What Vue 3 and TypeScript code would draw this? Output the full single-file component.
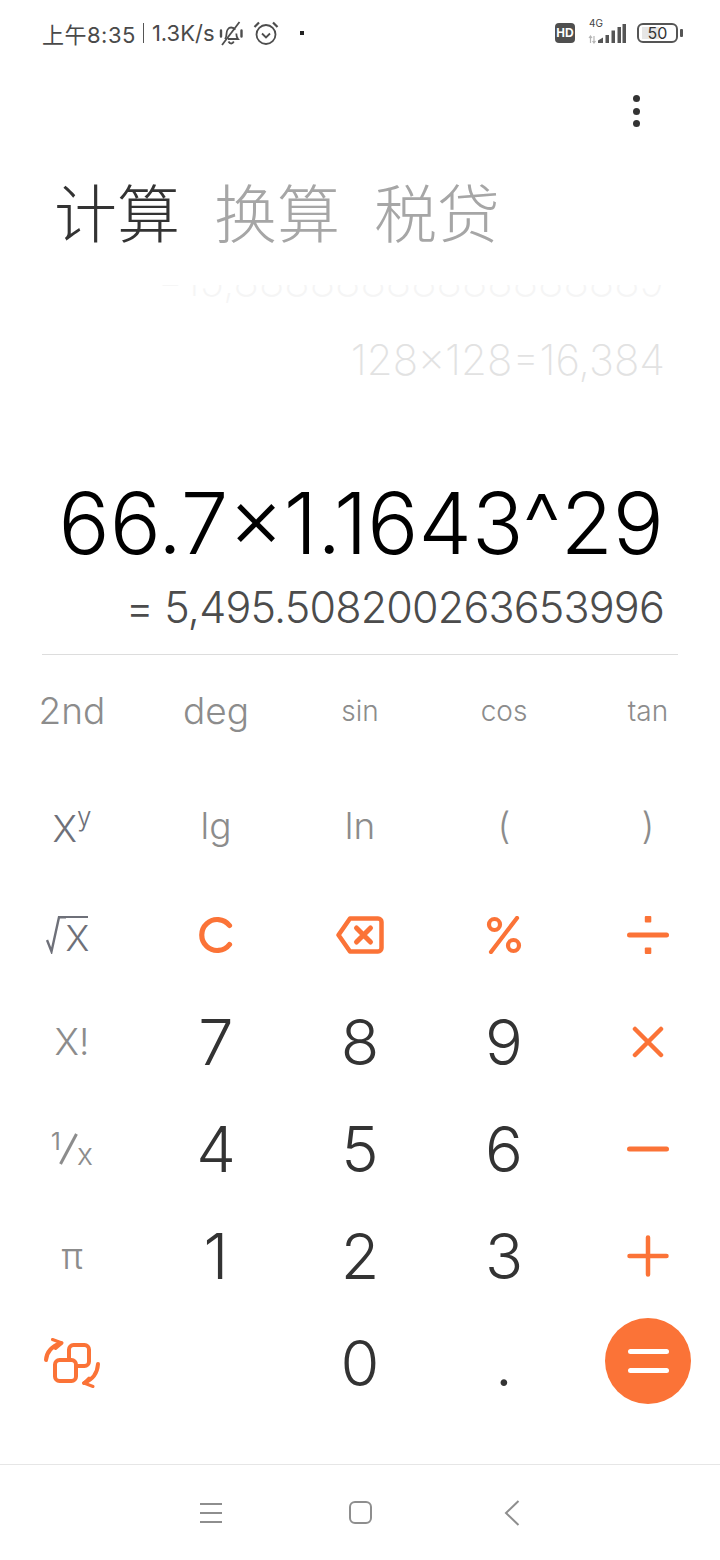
<script setup lang="ts">
interface Key {
  id: string;
  label?: string;
  kind: 'fn' | 'fnsm' | 'num' | 'icon';
}

const keys: Key[] = [
  { id: '2nd', label: '2nd', kind: 'fn' },
  { id: 'deg', label: 'deg', kind: 'fn' },
  { id: 'sin', label: 'sin', kind: 'fnsm' },
  { id: 'cos', label: 'cos', kind: 'fnsm' },
  { id: 'tan', label: 'tan', kind: 'fnsm' },
  { id: 'pow', kind: 'icon' },
  { id: 'lg', label: 'lg', kind: 'fn' },
  { id: 'ln', label: 'ln', kind: 'fn' },
  { id: 'lp', label: '(', kind: 'fn' },
  { id: 'rp', label: ')', kind: 'fn' },
  { id: 'sqrt', kind: 'icon' },
  { id: 'clear', kind: 'icon' },
  { id: 'back', kind: 'icon' },
  { id: 'pct', kind: 'icon' },
  { id: 'div', kind: 'icon' },
  { id: 'fact', label: 'X!', kind: 'fn' },
  { id: '7', label: '7', kind: 'num' },
  { id: '8', label: '8', kind: 'num' },
  { id: '9', label: '9', kind: 'num' },
  { id: 'mul', kind: 'icon' },
  { id: 'inv', kind: 'icon' },
  { id: '4', label: '4', kind: 'num' },
  { id: '5', label: '5', kind: 'num' },
  { id: '6', label: '6', kind: 'num' },
  { id: 'sub', kind: 'icon' },
  { id: 'pi', label: 'π', kind: 'fn' },
  { id: '1', label: '1', kind: 'num' },
  { id: '2', label: '2', kind: 'num' },
  { id: '3', label: '3', kind: 'num' },
  { id: 'add', kind: 'icon' },
  { id: 'swap', kind: 'icon' },
  { id: 'blank', label: '', kind: 'num' },
  { id: '0', label: '0', kind: 'num' },
  { id: 'dot', label: '.', kind: 'num' },
  { id: 'eq', kind: 'icon' }
];
</script>

<template>
  <div class="screen">
    <div class="status">
      <div class="status-left">
        <span class="clock">上午8:35</span>
        <span class="sep"></span>
        <span class="speed">1.3K/s</span>
        <svg class="bell" width="26" height="26" viewBox="0 0 26 26" fill="none" stroke="#4d4d4d" stroke-width="1.8">
          <path d="M7 19c1.200-1.500 1.500-3 1.500-5 0-3.500 1.800-6.500 4.700-6.500 1.800 0 3.200.8 4 2.200M18.300 13.500c0 2.200.4 4 1.700 5.500H10" />
          <path d="M10.500 21.500c.6 1.200 1.500 2 2.700 2s2-.8 2.600-2" />
          <path d="M4 25 21.500 2" />
          <path d="M3 10.500v6M23.500 10.500v6" stroke-linecap="round" stroke-width="2.400" />
        </svg>
        <svg class="alarm" width="26" height="26" viewBox="0 0 26 26" fill="none" stroke="#4d4d4d" stroke-width="1.800">
          <circle cx="13" cy="14.500" r="9.500" />
          <path d="M9 13.500 13 17.500l4-4" />
          <path d="M1.500 7 6 2.500M24.500 7 20 2.500" stroke-width="2.200" />
        </svg>
        <span class="tiny-dot"></span>
      </div>
      <div class="status-right">
        <span class="hd">HD</span>
        <div class="net">
          <span class="net-label">4G</span>
          <svg width="38" height="22" viewBox="0 0 38 22">
            <path d="M2.500 21v-7M1 16l1.500-2 1.500 2M6 14v7M4.500 19 6 21l1.500-2" stroke="#b5b5b5" stroke-width="1.200" fill="none" />
            <path d="M10 21v-2.500l5-3V21zM17.500 21V13h3.500v8zM23.500 21V8.500H27V21zM29.500 21V5H33v16zM34.500 21V2h3.500v19z" fill="#555" />
          </svg>
        </div>
        <div class="battery">
          <span class="battery-fill"></span>
          <span class="battery-text">50</span>
        </div>
        <span class="battery-cap"></span>
      </div>
    </div>

    <div class="toolbar">
      <div class="menu"><i></i><i></i><i></i></div>
    </div>

    <div class="tabs">
      <span class="tab active">计算</span>
      <span class="tab">换算</span>
      <span class="tab">税贷</span>
    </div>

    <div class="history">
      <div class="old">=15,88888888888888889</div>
      <div class="prev">128×128=16,384</div>
    </div>

    <div class="expr">66.7×1.1643^29</div>
    <div class="result">= 5,495.508200263653996</div>
    <div class="rule"></div>

    <div class="keypad">
      <div v-for="k in keys" :key="k.id" class="key" :class="[k.kind, 'k-' + k.id]">
        <template v-if="k.label">{{ k.label }}</template>
        <span v-else-if="k.id === 'pow'" class="pow">X<sup>y</sup></span>
        <span v-else-if="k.id === 'sqrt'" class="sqrt">
          <svg width="20" height="38" viewBox="0 0 20 38" fill="none" stroke="#6e7079" stroke-width="2.400">
            <path d="M1 24l4.500 11.500L13 1.200h7" />
          </svg>
          <span class="sqrt-x">X</span>
        </span>
        <span v-else-if="k.id === 'inv'" class="inv"><b>1</b><i></i><em>x</em></span>
        <svg v-else-if="k.id === 'clear'" width="36" height="38" viewBox="0 0 36 38" fill="none" stroke="#fb7337" stroke-width="5.200" stroke-linecap="round">
          <path d="M31.500 9.500A15.500 15.500 0 1 0 31.500 28.500" />
        </svg>
        <svg v-else-if="k.id === 'back'" width="48" height="38" viewBox="0 0 48 38" fill="none" stroke="#fb7337" stroke-width="4.500" stroke-linejoin="round" stroke-linecap="round">
          <path d="M14 2.500h28c2 0 3.500 1.500 3.500 3.500v26c0 2-1.500 3.500-3.500 3.500H14L2.500 19z" />
          <path d="M20.500 12l14 14M34.500 12l-14 14" stroke-width="5" />
        </svg>
        <svg v-else-if="k.id === 'pct'" width="36" height="38" viewBox="0 0 36 38" fill="none" stroke="#fb7337" stroke-width="4.200" stroke-linecap="round">
          <circle cx="8.500" cy="8.500" r="5.500" />
          <circle cx="27.500" cy="29.500" r="5.500" />
          <path d="M31 2 5 36" />
        </svg>
        <svg v-else-if="k.id === 'div'" width="42" height="38" viewBox="0 0 42 38" fill="#fb7337">
          <rect x="0" y="16.500" width="42" height="5" rx="2.500" />
          <rect x="17.800" y="0" width="6.500" height="6.500" rx="1" />
          <rect x="17.800" y="31.500" width="6.500" height="6.500" rx="1" />
        </svg>
        <svg v-else-if="k.id === 'mul'" width="32" height="32" viewBox="0 0 32 32" stroke="#fb7337" stroke-width="4.500" stroke-linecap="round">
          <path d="M3 3l26 26M29 3 3 29" />
        </svg>
        <svg v-else-if="k.id === 'sub'" width="42" height="6" viewBox="0 0 42 6">
          <rect width="42" height="5" y=".5" rx="2.500" fill="#fb7337" />
        </svg>
        <svg v-else-if="k.id === 'add'" width="42" height="42" viewBox="0 0 42 42" stroke="#fb7337" stroke-width="4.500" stroke-linecap="round">
          <path d="M2.500 21h37M21 2.500v37" />
        </svg>
        <svg v-else-if="k.id === 'swap'" width="58" height="50" viewBox="0 0 58 50" fill="none" stroke="#fb7337" stroke-linecap="round" stroke-linejoin="round">
          <rect x="26" y="7" width="20" height="21" rx="4.500" stroke-width="4" />
          <rect x="12" y="22" width="21" height="21" rx="4.500" fill="#fff" stroke-width="4" />
          <path d="M3 22C3.500 15 8 8.500 18 5" stroke-width="4" />
          <path d="M9.500 1.500 19 5l-6.500 5.500" stroke-width="3" />
          <path d="M55 26c-.5 8-5 15.500-14 19" stroke-width="4" />
          <path d="M50 48.500 41 45l5-5" stroke-width="3" />
        </svg>
        <span v-else-if="k.id === 'eq'" class="eq-btn"><i></i><i></i></span>
      </div>
    </div>

    <div class="nav">
      <svg width="24" height="22" viewBox="0 0 24 22" stroke="#8e8e8e" stroke-width="2">
        <path d="M1 2h22M1 11h22M1 20h22" />
      </svg>
      <span class="home"></span>
      <svg width="16" height="26" viewBox="0 0 16 26" fill="none" stroke="#8e8e8e" stroke-width="2">
        <path d="M14.500 1 2 13l12.500 12" />
      </svg>
    </div>
  </div>
</template>

<style>
html,
body {
  margin: 0;
  background: #fff;
}
</style>

<style scoped>
.screen {
  width: 720px;
  height: 1560px;
  background: #fff;
  overflow: hidden;
  font-family: Inter, "Noto Sans CJK SC", sans-serif;
  display: flex;
  flex-direction: column;
}

.status {
  height: 66px;
  display: flex;
  justify-content: space-between;
  align-items: center;
  padding: 0 37px 0 42px;
  box-sizing: border-box;
}

.status-left,
.status-right {
  display: flex;
  align-items: center;
}

.clock,
.speed {
  font-family: Inter, "Noto Sans CJK SC", sans-serif;
  font-size: 22px;
  color: #4a4a4a;
}

.clock {
  letter-spacing: 0.5px;
}

.sep {
  width: 1px;
  height: 20px;
  background: #555;
  margin: 0 8px 0 7px;
}

.bell {
  margin-left: 3px;
}

.alarm {
  margin-left: 9px;
}

.tiny-dot {
  width: 4px;
  height: 4px;
  background: #222;
  margin-left: 21px;
}

.hd {
  width: 20px;
  height: 20px;
  border-radius: 4px;
  background: #4f4f4f;
  color: #fff;
  font: bold 12px "Liberation Sans", sans-serif;
  display: flex;
  align-items: center;
  justify-content: center;
}

.net {
  position: relative;
  width: 38px;
  height: 22px;
  margin-left: 13px;
}

.net svg {
  position: absolute;
  left: 0;
  bottom: 0;
}

.net-label {
  position: absolute;
  left: 1px;
  top: -5px;
  font: 10px Inter, sans-serif;
  color: #444;
}

.battery {
  position: relative;
  width: 41px;
  height: 20px;
  margin-left: 11px;
  border: 2.500px solid #555;
  border-radius: 6px;
  box-sizing: border-box;
  display: flex;
  align-items: center;
  justify-content: center;
}

.battery-fill {
  position: absolute;
  left: 3px;
  top: 2px;
  bottom: 2px;
  width: 17px;
  background: #e6e6e6;
}

.battery-text {
  position: relative;
  font: 16px Inter, sans-serif;
  color: #333;
}

.battery-cap {
  width: 3px;
  height: 8px;
  margin-left: 2px;
  background: #555;
  border-radius: 1px;
}

.toolbar {
  height: 98px;
  display: flex;
  justify-content: flex-end;
  padding-right: 80px;
}

.menu {
  padding-top: 29px;
  display: flex;
  flex-direction: column;
  gap: 5.500px;
}

.menu i {
  display: block;
  width: 7px;
  height: 7px;
  border-radius: 50%;
  background: #333;
}

.tabs {
  display: flex;
  gap: 34px;
  padding-left: 54px;
  height: 92px;
  align-items: center;
}

.tab {
  font-family: "Noto Sans CJK SC", sans-serif;
  font-weight: 300;
  font-size: 63px;
  line-height: 92px;
  color: #a6a6a6;
}

.tab.active {
  color: #333;
}

.history {
  height: 190px;
  margin-top: 29px;
  overflow: hidden;
  position: relative;
  font-weight: 200;
}

.old {
  position: absolute;
  right: 56px;
  top: -30px;
  font-size: 42px;
  line-height: 52px;
  color: #f5f5f5;
}

.prev {
  position: absolute;
  right: 55px;
  top: 49px;
  font-size: 42px;
  line-height: 52px;
  color: #e2e2e2;
}

.expr {
  font-size: 85px;
  font-weight: 300;
  line-height: 98px;
  color: #000;
  text-align: right;
  padding-right: 56px;
  height: 98px;
}

.result {
  font-size: 43px;
  font-weight: 300;
  letter-spacing: -0.8px;
  line-height: 56px;
  color: #4c4c4c;
  text-align: right;
  padding-right: 56px;
  height: 56px;
  margin-top: 6px;
}

.rule {
  height: 1px;
  margin: 19px 42px 0;
  background: #ddd;
}

.keypad {
  display: grid;
  grid-template-columns: repeat(5, 144px);
  grid-template-rows: 115px 111px 107px 107px 107px 107px 107px;
  height: 809px;
}

.key {
  display: flex;
  align-items: center;
  justify-content: center;
}

.k-2nd,
.k-deg,
.k-sin,
.k-cos,
.k-tan {
  padding-bottom: 4px;
}

.k-pow {
  padding-top: 6px;
}

.fn {
  font-size: 37px;
  font-weight: 350;
  color: #8c8c8c;
}

.fnsm {
  font-size: 28px;
  font-weight: 350;
  color: #8c8c8c;
}

.num {
  font-size: 63px;
  font-weight: 300;
  color: #333;
}

.pow {
  font-size: 37px;
  font-weight: 300;
  color: #6e7079;
}

.pow sup {
  font-size: 26px;
  line-height: 0;
  vertical-align: 16px;
}

.sqrt {
  display: flex;
  align-items: flex-start;
  height: 38px;
  margin-right: 11px;
  color: #6e7079;
}

.sqrt-x {
  width: 22px;
  height: 36px;
  border-top: 2.400px solid #6e7079;
  text-align: center;
  font-size: 36px;
  font-weight: 300;
  line-height: 40px;
}

.inv {
  position: relative;
  display: block;
  width: 42px;
  height: 34px;
  color: #8c8c8c;
}

.inv b {
  position: absolute;
  left: 0;
  top: -4px;
  font-size: 24px;
  line-height: 28px;
  font-weight: 400;
}

.inv i {
  position: absolute;
  left: 16px;
  top: 0;
  width: 3px;
  height: 34px;
  background: #8c8c8c;
  transform: rotate(28deg);
}

.inv em {
  position: absolute;
  left: 26px;
  top: 8px;
  font-size: 30px;
  line-height: 28px;
  font-style: normal;
  font-weight: 300;
}

.eq-btn {
  width: 86px;
  height: 86px;
  margin-bottom: 3px;
  border-radius: 50%;
  background: #fb7337;
  display: flex;
  flex-direction: column;
  align-items: center;
  justify-content: center;
  gap: 14px;
}

.eq-btn i {
  display: block;
  width: 41px;
  height: 5px;
  border-radius: 2.500px;
  background: #fff;
}

.nav {
  height: 96px;
  border-top: 1px solid #e6e6e6;
  box-sizing: border-box;
  display: flex;
  align-items: center;
  padding-left: 199px;
}

.home {
  width: 23px;
  height: 23px;
  margin: 0 132px 0 126px;
  border: 2px solid #8e8e8e;
  border-radius: 6px;
  box-sizing: border-box;
}
</style>
